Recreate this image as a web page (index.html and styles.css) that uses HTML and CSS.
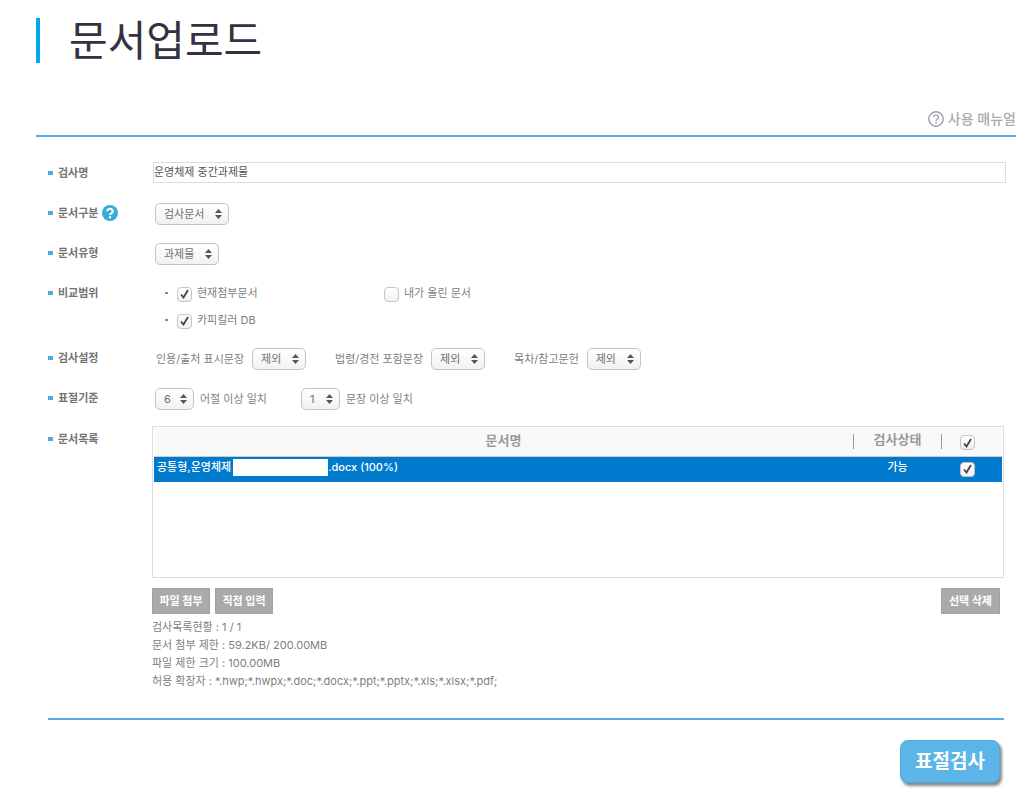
FILE: index.html
```html
<!DOCTYPE html>
<html lang="ko">
<head>
<meta charset="utf-8">
<title>문서업로드</title>
<link rel="stylesheet" href="styles.css">
</head>
<body>
<header class="page-head">
  <h1 class="title">문서업로드</h1>
  <a class="manual" href="#">
    <svg class="manual-icon" viewBox="0 0 16 16" aria-hidden="true"><circle cx="8" cy="8" r="7.2" fill="none" stroke="#9a9fb4" stroke-width="1.4"/><path d="M5.6 6.3a2.4 2.4 0 1 1 3.6 2.1C8.4 8.8 8 9.100 8 9.900" fill="none" stroke="#9a9fb4" stroke-width="1.400"/><circle cx="8" cy="11.800" r=".9" fill="#9a9fb4"/></svg>사용 매뉴얼</a>
</header>
<form class="form">
  <div class="row">
    <label class="name" for="title">검사명</label>
    <input class="text" id="title" type="text" value="운영체제 중간과제물">
  </div>
  <div class="row">
    <label class="name" for="kind">문서구분<svg class="help" viewBox="0 0 16 16" aria-hidden="true"><circle cx="8" cy="8" r="8" fill="#35acd7"/><path d="M5.200 6.200a2.800 2.400 0 1 1 4.400 1.900C8.600 8.700 8 8.900 8 10" fill="none" stroke="#fff" stroke-width="2.100"/><circle cx="8" cy="12.200" r="1.200" fill="#fff"/></svg></label>
    <div class="field"><select class="select w-xl" id="kind"><option>검사문서</option></select></div>
  </div>
  <div class="row">
    <label class="name" for="type">문서유형</label>
    <div class="field"><select class="select w-lg" id="type"><option>과제물</option></select></div>
  </div>
  <div class="row tall">
    <span class="name">비교범위</span>
    <ul class="scope">
      <li><label class="check"><input class="box" type="checkbox" checked>현재첨부문서</label></li>
      <li class="plain"><label class="check"><input class="box" type="checkbox">내가 올린 문서</label></li>
      <li><label class="check"><input class="box" type="checkbox" checked>카피킬러 DB</label></li>
    </ul>
  </div>
  <div class="row">
    <span class="name">검사설정</span>
    <div class="field options">
      <label class="option">인용/출처 표시문장<select class="select w-md"><option>제외</option></select></label>
      <label class="option">법령/경전 포함문장<select class="select w-md"><option>제외</option></select></label>
      <label class="option">목차/참고문헌<select class="select w-md"><option>제외</option></select></label>
    </div>
  </div>
  <div class="row">
    <span class="name">표절기준</span>
    <div class="field criteria">
      <label class="option"><select class="select w-sm"><option>6</option></select>어절 이상 일치</label>
      <label class="option"><select class="select w-sm"><option>1</option></select>문장 이상 일치</label>
    </div>
  </div>
  <div class="row list-row">
    <span class="name">문서목록</span>
    <div class="docs">
      <div class="frame">
        <table class="table">
          <thead><tr><th><span class="head">문서명</span></th><th class="state"><span class="bars">검사상태</span></th><th class="pick"><input class="box" type="checkbox" aria-label="전체 선택" checked></th></tr></thead>
          <tbody><tr><td><span class="file">공통형,운영체제<span class="mask"></span>.docx (100%)</span></td><td class="state"><span class="ok">가능</span></td><td class="pick"><input class="box" type="checkbox" aria-label="문서 선택" checked></td></tr></tbody>
        </table>
      </div>
      <div class="actions">
        <button class="btn" type="button">파일 첨부</button>
        <button class="btn" type="button">직접 입력</button>
        <button class="btn remove" type="button">선택 삭제</button>
      </div>
      <p class="info">검사목록현황 : 1 / 1</p>
      <p class="info">문서 첨부 제한 : 59.2KB/ 200.00MB</p>
      <p class="info">파일 제한 크기 : 100.00MB</p>
      <p class="info">허용 확장자 : *.hwp;*.hwpx;*.doc;*.docx;*.ppt;*.pptx;*.xls;*.xlsx;*.pdf;</p>
    </div>
  </div>
  <div class="submit-row"><button class="submit" type="button">표절검사</button></div>
</form>
</body>
</html>
```
FILE: styles.css
```css
* { box-sizing: border-box; }
body {
  margin: 0;
  padding: 18px 15px 15px 36px;
  background: #fff;
  color: #808080;
  font: 11px/18px Inter, "Noto Sans CJK KR", sans-serif;
}
input, select, button { font: inherit; margin: 0; }
.page-head { border-bottom: 2px solid #55aee5; }
.title {
  margin: 0;
  padding-left: 29px;
  border-left: 4px solid #00a8ec;
  color: #343240;
  font-size: 42px;
  font-weight: 400;
  line-height: 45px;
}
.manual {
  display: flex;
  justify-content: flex-end;
  align-items: center;
  gap: 4px;
  margin: 46px 0 6px;
  color: #aaa;
  font-size: 14px;
  line-height: 20px;
  font-weight: 500;
  text-decoration: none;
}
.manual-icon { width: 16px; height: 16px; }
.form { padding: 16px 12px 0; }
.row { display: flex; height: 40px; align-items: center; }
.name {
  display: flex;
  flex: none;
  align-items: center;
  width: 105px;
  color: #747474;
  font-weight: 600;
}
.name::before {
  content: "";
  width: 5px;
  height: 4px;
  margin-right: 5px;
  background: #4fa9e4;
}
.help { width: 16px; height: 16px; margin-left: 4px; }
.text {
  flex: 1;
  height: 21px;
  margin: 0 -2px 2px 0;
  padding: 0 0 2px;
  border: 1px solid #ddd;
  color: #555;
}
.field { display: flex; align-items: center; padding: 2px 0 0 2px; }
.select {
  appearance: none;
  height: 22px;
  padding: 0 0 0 8px;
  border: 1px solid #c4c4c4;
  border-radius: 5px;
  color: #707070;
  background: url("data:image/svg+xml,%3Csvg xmlns='http://www.w3.org/2000/svg' width='7' height='10'%3E%3Cpath d='M0 4L3.5 0L7 4ZM0 6L3.5 10L7 6Z' fill='%23555'/%3E%3C/svg%3E") no-repeat right 6px center, linear-gradient(#fff, #f1f1f1);
}
.w-xl { width: 74px; }
.w-lg { width: 64px; }
.w-md { width: 54px; }
.w-sm { width: 39px; }
.option { display: flex; align-items: center; gap: 6px; }
.options { gap: 29px; padding-left: 3px; }
.options .option { gap: 8px; }
.criteria { gap: 34px; }
.tall { height: 65px; align-items: flex-start; }
.tall .name { height: 40px; }
.scope {
  display: grid;
  grid-template-columns: 219px auto;
  row-gap: 9px;
  margin: 0;
  padding: 11px 0 0 12px;
  list-style: none;
}
.scope li::before {
  content: "";
  width: 3px;
  height: 2px;
  margin-right: 9px;
  background: #888;
}
.scope .plain::before { display: none; }
.scope li { display: flex; align-items: center; }
.check { display: flex; align-items: center; gap: 5px; }
.box {
  appearance: none;
  width: 15px;
  height: 15px;
  border: 1px solid #c4c4c4;
  border-radius: 4px;
  background: linear-gradient(#fff, #f1f1f1);
}
.check .box { margin-top: 2px; }
.box:checked {
  background: url("data:image/svg+xml,%3Csvg xmlns='http://www.w3.org/2000/svg' width='9' height='10'%3E%3Cpath d='M1 5.500L3.500 8.500L8 1' fill='none' stroke='%23444' stroke-width='1.800'/%3E%3C/svg%3E") no-repeat center, linear-gradient(#fff, #f1f1f1);
}
.list-row { height: auto; align-items: flex-start; padding-top: 8px; }
.list-row .name { width: 104px; padding-top: 4px; }
.docs { flex: 1; }
.frame { height: 152px; padding: 1px; border: 1px solid #ddd; }
.table { width: 100%; border-collapse: collapse; table-layout: fixed; }
.table th, .table td { padding: 0; }
.table th {
  height: 28px;
  border-bottom: 1px solid #ccc;
  background: #f9f9f9;
  color: #999;
  font-size: 13px;
  font-weight: 700;
}
.table td { height: 25px; background: #007acd; color: #fff; font-weight: 500; }
.table .state { width: 89px; text-align: center; }
.table .pick { width: 60px; text-align: center; }
.table .pick .box { display: block; margin: 2px auto 0 18px; }
.table td.pick .box { margin-top: 0; }
.head { display: block; padding-bottom: 4px; }
.ok { display: block; padding-bottom: 4px; }
.bars {
  display: block;
  height: 15px;
  border: solid #999;
  border-width: 0 1px;
  line-height: 11px;
}
.file { display: flex; align-items: center; padding-left: 3px; height: 21px; margin-bottom: 4px; }
.mask { width: 95px; height: 17px; margin-left: 2px; background: #fff; }
.actions { display: flex; gap: 5px; padding: 10px 4px 4px 0; }
.btn {
  height: 26px;
  min-width: 58px;
  padding: 0 5px;
  border: 1px solid #a2a2a2;
  background: #aaa;
  color: #fff;
  font-weight: 700;
}
.remove { margin-left: auto; padding: 0 7px; }
.info { margin: 0; }
.submit-row {
  display: flex;
  justify-content: flex-end;
  margin-top: 28px;
  padding: 20px 4px 0 0;
  border-top: 2px solid #55aee5;
}
.submit {
  height: 43px;
  padding: 0 14px;
  border: 1px solid #4ba9df;
  border-radius: 8px;
  background: #5bb5e8;
  box-shadow: 2px 3px 3px #888;
  color: #fff;
  font-size: 19px;
  font-weight: 700;
}
```
